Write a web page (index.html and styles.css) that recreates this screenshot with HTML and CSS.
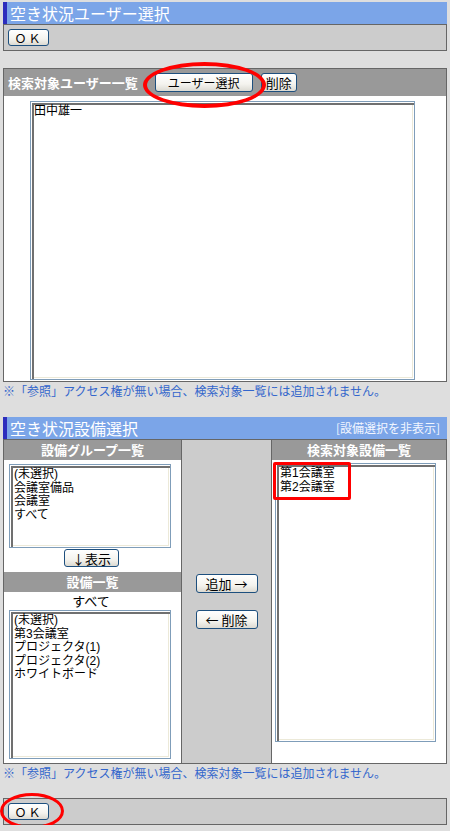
FILE: index.html
```html
<!DOCTYPE html>
<html lang="ja">

<head>
    <meta charset="UTF-8">
    <meta name="viewport" content="width=device-width, initial-scale=1.0">
    <title>空き状況ユーザー選択</title>
    <link rel="stylesheet" href="styles.css">
</head>

<body>
    <div class="page">
        <div class="title-bar">空き状況ユーザー選択</div>
        <div class="btn-box">
            <button type="button" class="btn btn-ok">ＯＫ</button>
        </div>

        <div class="user-panel">
            <div class="panel-head">
                <span class="head-label">検索対象ユーザー一覧</span>
                <button type="button" class="btn btn-user">ユーザー選択</button>
                <button type="button" class="btn btn-del">削除</button>
            </div>
            <div class="panel-body">
                <div class="listbox user-list">
                    <div>田中雄一</div>
                </div>
            </div>
        </div>
        <p class="note">※「参照」アクセス権が無い場合、検索対象一覧には追加されません。</p>

        <div class="title-bar title-second">
            <span>空き状況設備選択</span>
            <a href="#" class="title-link">[設備選択を非表示]</a>
        </div>
        <div class="equip-table">
            <div class="col col-left">
                <div class="col-head">設備グループ一覧</div>
                <div class="col-body">
                    <div class="listbox group-list">
                        <div>(未選択)</div>
                        <div>会議室備品</div>
                        <div>会議室</div>
                        <div>すべて</div>
                    </div>
                    <button type="button" class="btn btn-show">↓表示</button>
                </div>
                <div class="col-head">設備一覧</div>
                <div class="col-body col-body-last">
                    <div class="all-label">すべて</div>
                    <div class="listbox equip-list">
                        <div>(未選択)</div>
                        <div>第3会議室</div>
                        <div>プロジェクタ(1)</div>
                        <div>プロジェクタ(2)</div>
                        <div>ホワイトボード</div>
                    </div>
                </div>
            </div>
            <div class="col col-mid">
                <button type="button" class="btn btn-move">追加 →</button>
                <button type="button" class="btn btn-move">← 削除</button>
            </div>
            <div class="col col-right">
                <div class="col-head">検索対象設備一覧</div>
                <div class="col-body col-body-right">
                    <div class="listbox target-list">
                        <div>第1会議室</div>
                        <div>第2会議室</div>
                    </div>
                </div>
            </div>
        </div>
        <p class="note">※「参照」アクセス権が無い場合、検索対象一覧には追加されません。</p>

        <div class="btn-box bottom-box">
            <button type="button" class="btn btn-ok">ＯＫ</button>
        </div>

        <!-- red marks drawn over the screen -->
        <span class="mark mark-user"></span>
        <span class="mark mark-target"></span>
        <span class="mark mark-ok"></span>
    </div>
</body>

</html>
```

FILE: styles.css
```css
body {
    margin: 0;
    background-color: #dedede;
    font-family: "Noto Sans CJK JP", "Noto Sans", sans-serif;
    font-size: 13px;
    color: #000;
}

.page {
    position: relative;
    width: 444px;
    padding: 2px 3px 0;
}

.title-bar {
    display: flex;
    justify-content: space-between;
    align-items: center;
    height: 22px;
    padding: 0 7px 0 3px;
    border-left: 4px solid #2d2dbd;
    background-color: #7ba5e8;
    color: #fff;
    font-size: 16px;
    line-height: 22px;
    box-sizing: border-box;
}

.title-second {
    margin-top: 17px;
}

.title-link {
    font-size: 12px;
    color: #f2f6ff;
    text-decoration: none;
}

.btn-box {
    height: 27px;
    padding: 4px;
    border: 1px solid #666;
    background-color: #ccc;
    box-sizing: border-box;
}

.bottom-box {
    margin-top: 16px;
}

.btn {
    display: block;
    padding: 0;
    font-family: inherit;
    font-size: 12px;
    line-height: 15px;
    color: #000;
    border: 1px solid #1d4f7e;
    border-radius: 3px;
    background: linear-gradient(#ffffff, #f4f3ee 60%, #dcdad2);
    cursor: pointer;
}

.btn-ok {
    width: 41px;
    height: 17px;
    letter-spacing: 2px;
}

.user-panel {
    margin-top: 17px;
    border: 1px solid #666;
    background-color: #fff;
}

.panel-head {
    display: flex;
    align-items: center;
    height: 27px;
    padding-left: 4px;
    background-color: #999;
}

.head-label {
    color: #fff;
    font-weight: bold;
    font-size: 13px;
}

.btn-user {
    width: 98px;
    height: 19px;
    margin-left: 17px;
}

.btn-del {
    width: 36px;
    height: 19px;
    margin-left: 8px;
    font-size: 13px;
}

.panel-body {
    padding: 5px 0 1px 26px;
}

.listbox {
    padding: 3px 4px 2px;
    border: 1px solid #7f9db9;
    background-color: #fff;
    box-shadow: inset 1px 1px 0 #fff, inset 3px 3px 0 #707070, inset -1px -1px 0 #fff, inset -2px -2px 0 #ece9d8;
    box-sizing: border-box;
    font-family: "Liberation Sans", "Noto Sans CJK JP", sans-serif;
    font-size: 12px;
    line-height: 13.5px;
    white-space: nowrap;
}

.user-list {
    width: 385px;
    height: 279px;
    padding-left: 3px;
}

.note {
    margin: 0;
    height: 18px;
    font-size: 12px;
    line-height: 18px;
    color: #3366cc;
}

.equip-table {
    display: grid;
    grid-template-columns: 178px 90px 1fr;
    border: 1px solid #666;
    background-color: #fff;
}

.col-left,
.col-mid {
    border-right: 1px solid #666;
}

.col-head {
    height: 20px;
    line-height: 20px;
    text-align: center;
    background-color: #999;
    color: #fff;
    font-weight: bold;
    font-size: 13px;
}

.col-body {
    padding: 4px 0 5px 5px;
}

.col-body-last {
    padding-top: 0;
    padding-bottom: 4px;
}

.col-body-right {
    padding: 3px 0 0 3px;
}

.group-list {
    width: 162px;
    height: 84px;
}

.btn-show {
    width: 55px;
    height: 18px;
    margin: 1px 0 0 55px;
    font-size: 13px;
}

.all-label {
    height: 18px;
    line-height: 18px;
    padding-right: 8px;
    text-align: center;
    font-size: 13px;
}

.equip-list {
    width: 162px;
    height: 149px;
}

.col-mid {
    display: flex;
    flex-direction: column;
    justify-content: center;
    align-items: center;
    gap: 17px;
    background-color: #ccc;
}

.btn-move {
    width: 62px;
    height: 19px;
    font-size: 13px;
}

.target-list {
    width: 161px;
    height: 279px;
}

.mark {
    position: absolute;
    border: 3px solid #f00;
    box-sizing: border-box;
}

.mark-user {
    left: 143px;
    top: 62px;
    width: 123px;
    height: 46px;
    border-width: 4px;
    border-radius: 50%;
}

.mark-target {
    left: 273px;
    top: 462px;
    width: 78px;
    height: 38px;
    border-radius: 2px;
}

.mark-ok {
    left: 0;
    top: 793px;
    width: 64px;
    height: 36px;
    border-radius: 50%;
}
```
